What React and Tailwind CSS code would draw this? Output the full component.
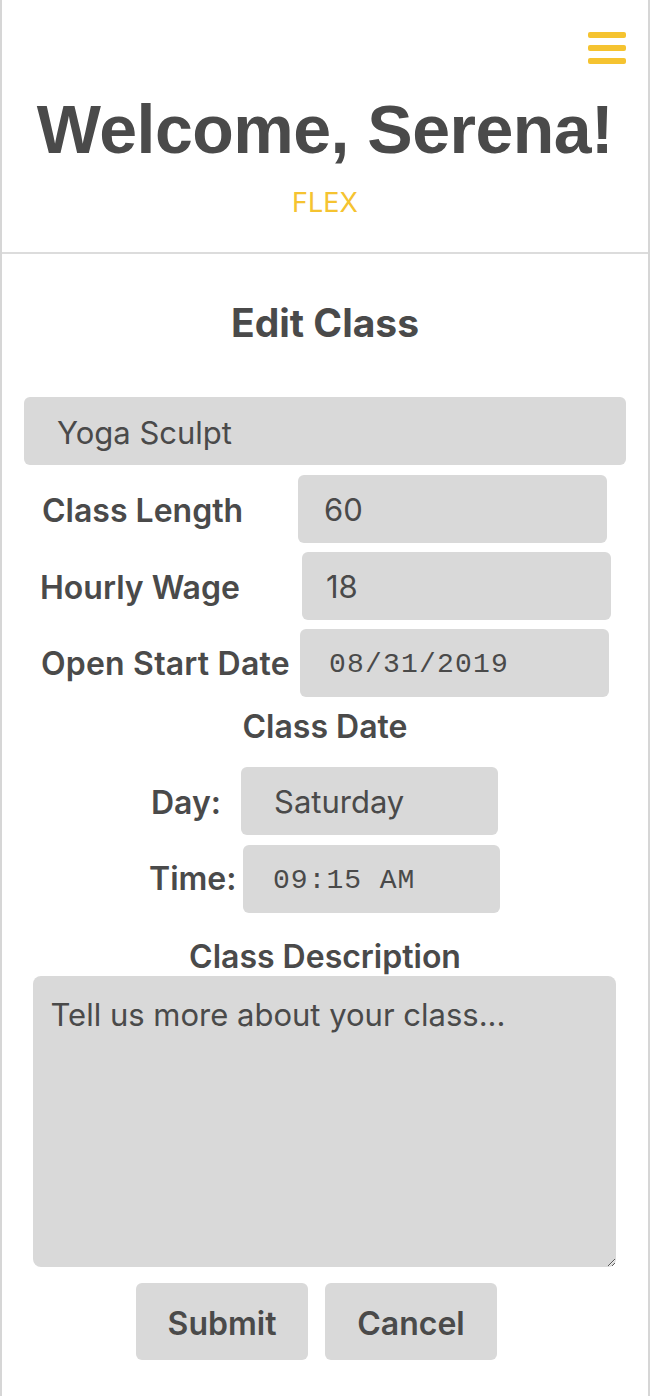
import React from "react";

const inputBox =
  "h-[68px] rounded-[6px] bg-[#d9d9d9] text-[#4a4a4a] outline-none border-0";

function Row({ label, labelClass, inputClass, children }) {
  return (
    <div className="flex w-full items-center">
      <span className={labelClass}>{label}</span>
      <div className={inputClass}>{children}</div>
    </div>
  );
}

export default function App() {
  return (
    <div className="min-h-[1396px] border-x-2 border-[#d6d6d6] bg-white font-['Inter',sans-serif] text-[#4a4a4a]">
      {/* Header */}
      <header className="flex h-[254px] flex-col border-b-2 border-[#dcdcdc]">
        <div className="flex justify-end pr-[22px] pt-[32px]">
          <button className="flex flex-col gap-[7px]">
            <span className="block h-[6px] w-[38px] rounded-[2px] bg-[#f5c330]" />
            <span className="block h-[6px] w-[38px] rounded-[2px] bg-[#f5c330]" />
            <span className="block h-[6px] w-[38px] rounded-[2px] bg-[#f5c330]" />
          </button>
        </div>
        <h1 className="mt-[31px] text-center font-['Liberation_Sans',Arial,sans-serif] text-[68px] font-bold leading-none tracking-[-0.5px]">
          Welcome, Serena!
        </h1>
        <p className="mt-[26px] text-center text-[27px] leading-none text-[#f5c330]">
          FLEX
        </p>
      </header>

      {/* Form */}
      <form className="flex flex-col items-center">
        <h2 className="mt-[49px] text-[39px] font-bold leading-none">Edit Class</h2>

        <div className="mt-[55px] w-full pl-[22px] pr-[22px]">
          <input
            readOnly
            value="Yoga Sculpt"
            className={`${inputBox} w-[602px] pl-[33px] pt-[2px] text-[31px]`}
          />
        </div>

        <div className="mt-[10px] flex w-full flex-col gap-[9px]">
          <Row
            label="Class Length"
            labelClass="ml-[40px] w-[256px] pt-[3px] text-[32px] font-semibold"
            inputClass={`${inputBox} flex w-[309px] items-center pl-[26px] pt-[3px] text-[31px]`}
          >
            60
          </Row>
          <Row
            label="Hourly Wage"
            labelClass="ml-[38px] w-[262px] pt-[3px] text-[32px] font-semibold"
            inputClass={`${inputBox} flex w-[309px] items-center pl-[24px] pt-[3px] text-[31px]`}
          >
            18
          </Row>
          <Row
            label="Open Start Date"
            labelClass="ml-[39px] w-[259px] pt-[2px] text-[32px] font-semibold tracking-[0.2px]"
            inputClass={`${inputBox} flex w-[309px] items-center pl-[29px] pt-[3px] font-['Liberation_Mono',monospace] text-[28px] tracking-[1.2px]`}
          >
            08/31/2019
          </Row>
        </div>

        <h3 className="mt-[14px] text-[32px] font-semibold leading-none">Class Date</h3>

        <div className="mt-[24px] flex w-full flex-col gap-[10px]">
          <Row
            label="Day:"
            labelClass="ml-[149px] w-[90px] pt-[3px] text-[32px] font-semibold"
            inputClass={`${inputBox} flex w-[257px] items-center pl-[33px] pt-[3px] text-[31px]`}
          >
            Saturday
          </Row>
          <Row
            label="Time:"
            labelClass="ml-[147px] w-[94px] text-[32px] font-semibold"
            inputClass={`${inputBox} flex w-[257px] items-center pl-[30px] pt-[3px] font-['Liberation_Mono',monospace] text-[28px] tracking-[1px]`}
          >
            09:15 AM
          </Row>
        </div>

        <h3 className="mt-[28px] text-[32px] font-semibold leading-none">Class Description</h3>

        <textarea
          placeholder="Tell us more about your class..."
          className="mt-[3px] h-[291px] w-[583px] -translate-x-[1px] rounded-[8px] bg-[#d9d9d9] px-[18px] pt-[20px] text-[31px] leading-tight text-[#4a4a4a] outline-none placeholder:text-[#4a4a4a]"
        />

        <div className="mt-[16px] mr-[17px] flex gap-[17px]">
          <button
            type="button"
            className="h-[77px] w-[172px] rounded-[6px] bg-[#d9d9d9] pt-[4px] text-[32px] font-semibold"
          >
            Submit
          </button>
          <button
            type="button"
            className="h-[77px] w-[172px] rounded-[6px] bg-[#d9d9d9] pt-[4px] text-[32px] font-semibold"
          >
            Cancel
          </button>
        </div>
      </form>
    </div>
  );
}
